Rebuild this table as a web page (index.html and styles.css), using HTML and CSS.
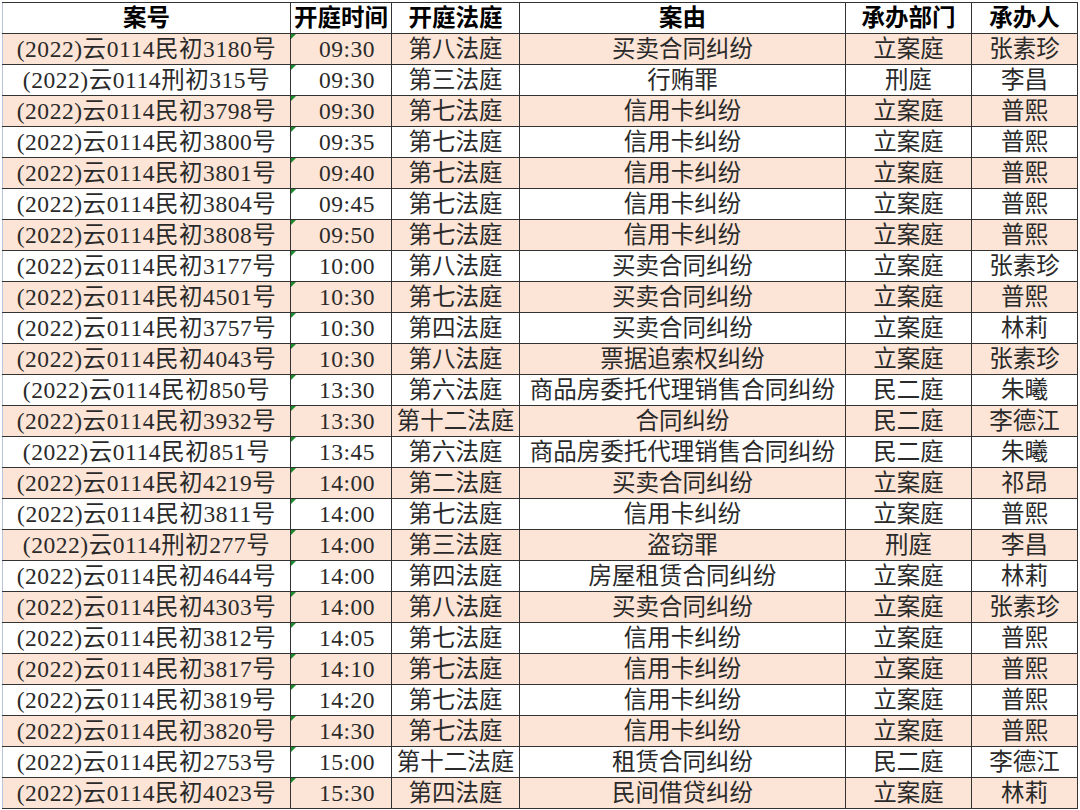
FILE: index.html
```html
<!DOCTYPE html>
<html lang="zh-CN">
<head>
<meta charset="utf-8">
<title>开庭公告</title>
<link rel="stylesheet" href="styles.css">
</head>
<body>
<table class="sheet">
  <colgroup>
    <col class="c-no"><col class="c-time"><col class="c-court"><col class="c-cause"><col class="c-dept"><col class="c-judge">
  </colgroup>
  <thead>
    <tr><th>案号</th><th>开庭时间</th><th>开庭法庭</th><th>案由</th><th>承办部门</th><th>承办人</th></tr>
  </thead>
  <tbody>
    <tr><td class="no">(2022)云0114民初3180号</td><td class="time">09:30</td><td>第八法庭</td><td>买卖合同纠纷</td><td>立案庭</td><td>张素珍</td></tr>
    <tr><td class="no">(2022)云0114刑初315号</td><td class="time">09:30</td><td>第三法庭</td><td>行贿罪</td><td>刑庭</td><td>李昌</td></tr>
    <tr><td class="no">(2022)云0114民初3798号</td><td class="time">09:30</td><td>第七法庭</td><td>信用卡纠纷</td><td>立案庭</td><td>普熙</td></tr>
    <tr><td class="no">(2022)云0114民初3800号</td><td class="time">09:35</td><td>第七法庭</td><td>信用卡纠纷</td><td>立案庭</td><td>普熙</td></tr>
    <tr><td class="no">(2022)云0114民初3801号</td><td class="time">09:40</td><td>第七法庭</td><td>信用卡纠纷</td><td>立案庭</td><td>普熙</td></tr>
    <tr><td class="no">(2022)云0114民初3804号</td><td class="time">09:45</td><td>第七法庭</td><td>信用卡纠纷</td><td>立案庭</td><td>普熙</td></tr>
    <tr><td class="no">(2022)云0114民初3808号</td><td class="time">09:50</td><td>第七法庭</td><td>信用卡纠纷</td><td>立案庭</td><td>普熙</td></tr>
    <tr><td class="no">(2022)云0114民初3177号</td><td class="time">10:00</td><td>第八法庭</td><td>买卖合同纠纷</td><td>立案庭</td><td>张素珍</td></tr>
    <tr><td class="no">(2022)云0114民初4501号</td><td class="time">10:30</td><td>第七法庭</td><td>买卖合同纠纷</td><td>立案庭</td><td>普熙</td></tr>
    <tr><td class="no">(2022)云0114民初3757号</td><td class="time">10:30</td><td>第四法庭</td><td>买卖合同纠纷</td><td>立案庭</td><td>林莉</td></tr>
    <tr><td class="no">(2022)云0114民初4043号</td><td class="time">10:30</td><td>第八法庭</td><td>票据追索权纠纷</td><td>立案庭</td><td>张素珍</td></tr>
    <tr><td class="no">(2022)云0114民初850号</td><td class="time">13:30</td><td>第六法庭</td><td>商品房委托代理销售合同纠纷</td><td>民二庭</td><td>朱曦</td></tr>
    <tr><td class="no">(2022)云0114民初3932号</td><td class="time">13:30</td><td>第十二法庭</td><td>合同纠纷</td><td>民二庭</td><td>李德江</td></tr>
    <tr><td class="no">(2022)云0114民初851号</td><td class="time">13:45</td><td>第六法庭</td><td>商品房委托代理销售合同纠纷</td><td>民二庭</td><td>朱曦</td></tr>
    <tr><td class="no">(2022)云0114民初4219号</td><td class="time">14:00</td><td>第二法庭</td><td>买卖合同纠纷</td><td>立案庭</td><td>祁昂</td></tr>
    <tr><td class="no">(2022)云0114民初3811号</td><td class="time">14:00</td><td>第七法庭</td><td>信用卡纠纷</td><td>立案庭</td><td>普熙</td></tr>
    <tr><td class="no">(2022)云0114刑初277号</td><td class="time">14:00</td><td>第三法庭</td><td>盗窃罪</td><td>刑庭</td><td>李昌</td></tr>
    <tr><td class="no">(2022)云0114民初4644号</td><td class="time">14:00</td><td>第四法庭</td><td>房屋租赁合同纠纷</td><td>立案庭</td><td>林莉</td></tr>
    <tr><td class="no">(2022)云0114民初4303号</td><td class="time">14:00</td><td>第八法庭</td><td>买卖合同纠纷</td><td>立案庭</td><td>张素珍</td></tr>
    <tr><td class="no">(2022)云0114民初3812号</td><td class="time">14:05</td><td>第七法庭</td><td>信用卡纠纷</td><td>立案庭</td><td>普熙</td></tr>
    <tr><td class="no">(2022)云0114民初3817号</td><td class="time">14:10</td><td>第七法庭</td><td>信用卡纠纷</td><td>立案庭</td><td>普熙</td></tr>
    <tr><td class="no">(2022)云0114民初3819号</td><td class="time">14:20</td><td>第七法庭</td><td>信用卡纠纷</td><td>立案庭</td><td>普熙</td></tr>
    <tr><td class="no">(2022)云0114民初3820号</td><td class="time">14:30</td><td>第七法庭</td><td>信用卡纠纷</td><td>立案庭</td><td>普熙</td></tr>
    <tr><td class="no">(2022)云0114民初2753号</td><td class="time">15:00</td><td>第十二法庭</td><td>租赁合同纠纷</td><td>民二庭</td><td>李德江</td></tr>
    <tr><td class="no">(2022)云0114民初4023号</td><td class="time">15:30</td><td>第四法庭</td><td>民间借贷纠纷</td><td>立案庭</td><td>林莉</td></tr>
  </tbody>
</table>
</body>
</html>
```
FILE: styles.css
```css
html, body {
  margin: 0;
  padding: 0;
  background: #ffffff;
}

body {
  padding: 2px 0 0 2px;
}

.sheet {
  border-collapse: collapse;
  table-layout: fixed;
  width: 1076px;
  font-family: "Liberation Serif", "Noto Sans CJK SC", serif;
  font-size: 23.5px;
  color: #2a2a2a;
}

.c-no { width: 288px; }
.c-time { width: 101px; }
.c-court { width: 128px; }
.c-cause { width: 326px; }
.c-dept { width: 126px; }
.c-judge { width: 106px; }

.sheet th,
.sheet td {
  height: 30px;
  padding: 0;
  text-align: center;
  vertical-align: middle;
  white-space: nowrap;
  overflow: hidden;
  line-height: 30px;
  border: 1px solid #333333;
}

.sheet th:first-child,
.sheet td:first-child {
  border-left: 1px solid #b9c4d6;
}

.sheet th {
  font-weight: bold;
  color: #000000;
  background: #ffffff;
}

.sheet tbody tr:nth-child(odd) td {
  background: #fce4d6;
}

.sheet td.no {
  letter-spacing: 0.55px;
}

.sheet td.time {
  position: relative;
  padding-left: 12px;
  letter-spacing: 0.5px;
}

.sheet td.time::before {
  content: "";
  position: absolute;
  left: 0;
  top: 0;
  width: 0;
  height: 0;
  border-top: 5px solid #1e8a2e;
  border-right: 5px solid transparent;
}
```
